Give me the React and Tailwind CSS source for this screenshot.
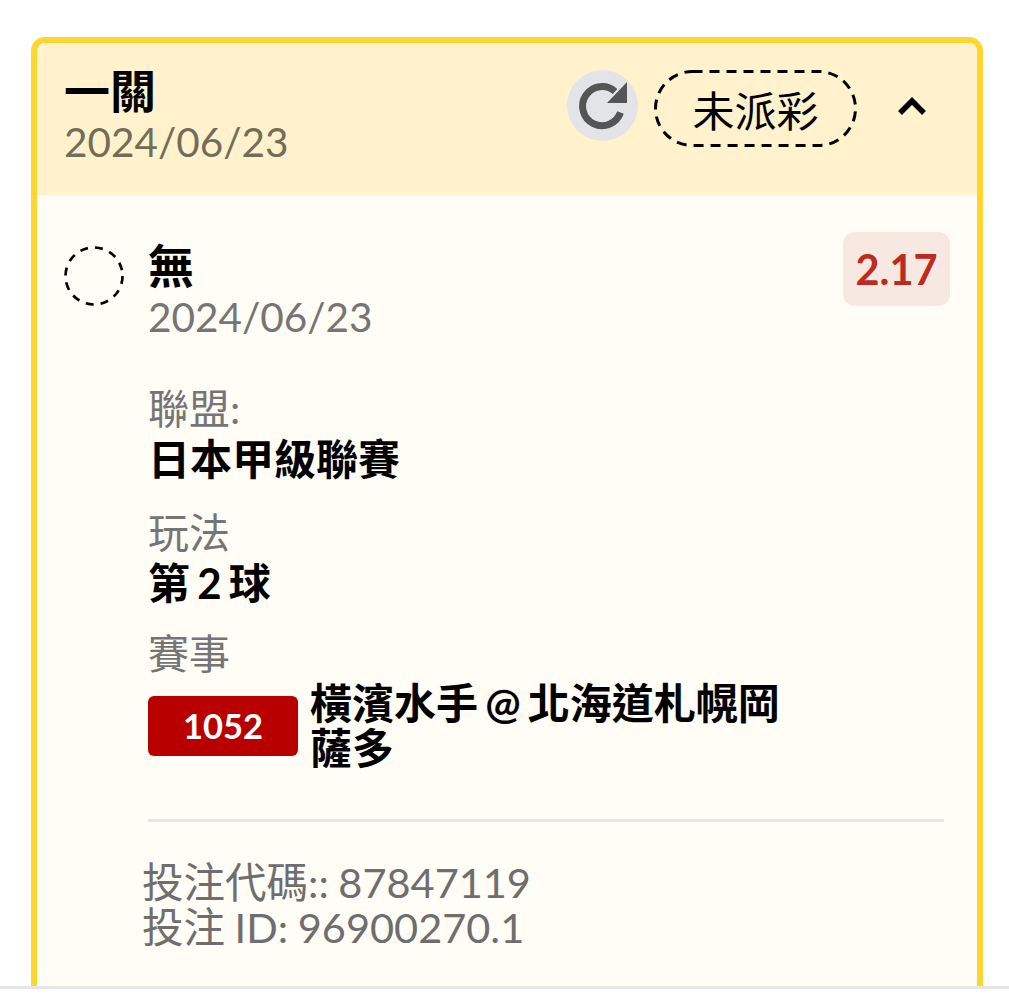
import React from "react";

const cjk = "font-['Lato','Noto_Sans_CJK_TC',sans-serif]";

const Section = ({ label, value, className }) => (
  <div className={className}>
    <div className="text-[41px] leading-[40px] text-[#757575]">{label}</div>
    <div className="mt-[10px] text-[42px] leading-[40px] font-bold text-black [word-spacing:-3px]">{value}</div>
  </div>
);

export default function App() {
  return (
    <div className={`h-[1000px] flex flex-col bg-white overflow-hidden ${cjk}`}>
      <div className="flex-1 overflow-hidden pt-[37px] pl-[31px] pr-[26px]">
        <div className="border-[6px] border-b-0 border-[#FFD52E] rounded-t-[14px] bg-[#FFFDF5] h-full">
          <div className="h-[152px] bg-[#FFF2CC] rounded-t-[8px] flex justify-between pl-[27px] pr-[51px] pt-[25px]">
            <div>
              <div className="text-[46px] leading-[46px] font-bold text-black">一關</div>
              <div className="mt-[8px] text-[40.5px] leading-[40px] text-[#736D58]">2024/06/23</div>
            </div>
            <div className="flex items-start">
              <div className="w-[71px] h-[71px] mt-[2px] rounded-full bg-[#E2E4E8]">
                <svg viewBox="0 0 71 71" className="w-[71px] h-[71px]">
                  <path d="M48 21.5A19.5 19.5 0 1 0 53.5 42.5" fill="none" stroke="#555555" strokeWidth="7" />
                  <path d="M60 12V33H40Z" fill="#555555" />
                </svg>
              </div>
              <div className="relative ml-[16px] mt-[2px] w-[203px] h-[77px] pt-[5px] flex items-center justify-center text-[42px] text-black">
                <svg viewBox="0 0 203 77" className="absolute inset-0 w-[203px] h-[77px]" fill="none">
                  <rect x="1.5" y="1.5" width="200" height="74" rx="37" stroke="#000" strokeWidth="3" strokeDasharray="10 7" />
                </svg>
                未派彩
              </div>
              <svg viewBox="0 0 28 18" className="ml-[41px] mt-[29px] w-[28px] h-[18px]" fill="none" stroke="#000" strokeWidth="5.5">
                <path d="M2 16 14 4 26 16" />
              </svg>
            </div>
          </div>
          <div className="pl-[27px] pr-[27px] pt-[37px]">
            <div className="flex items-start">
              <svg viewBox="0 0 60 60" className="w-[60px] h-[60px] mt-[14px] shrink-0" fill="none">
                <circle cx="30" cy="30" r="28.5" stroke="#000" strokeWidth="2.7" strokeDasharray="8 7" />
              </svg>
              <div className="ml-[24px] flex-1">
                <div className="mt-[11px] text-[46px] leading-[46px] font-bold text-black">無</div>
                <div className="mt-[8px] text-[40.5px] leading-[40px] text-[#757575]">2024/06/23</div>
              </div>
              <div className="w-[107px] h-[74px] rounded-[12px] bg-[#F7E8E1] flex items-center justify-center text-[41.5px] font-bold text-[#BC2A20]">
                2.17
              </div>
            </div>
            <div className="ml-[84px]">
              <Section className="mt-[52px]" label="聯盟:" value="日本甲級聯賽" />
              <Section className="mt-[34px]" label="玩法" value="第 2 球" />
              <div className="mt-[31px] text-[41px] leading-[40px] text-[#757575]">賽事</div>
              <div className="flex items-start mt-[7px]">
                <div className="w-[150px] h-[60px] mt-[15px] rounded-[6px] bg-[#B80000] flex items-center justify-center text-[34.5px] font-bold text-white shrink-0">
                  1052
                </div>
                <div className="ml-[12px] w-[490px] text-[42px] leading-[45px] font-bold text-black [word-spacing:-3px]">
                  橫濱水手 @ 北海道札幌岡薩多
                </div>
              </div>
              <div className="mt-[48px] mr-[6px] h-[3px] bg-[#E8E6E1]" />
              <div className="mt-[38px] ml-[-6px] text-[41.5px] leading-[45px] text-[#6E6E6E] [word-spacing:-1px]">
                <div>投注代碼:: 87847119</div>
                <div>投注 ID: 96900270.1</div>
              </div>
            </div>
          </div>
        </div>
      </div>
      <div className="h-[14px] border-t-[3px] border-[#E6E6E6] bg-white" />
    </div>
  );
}
